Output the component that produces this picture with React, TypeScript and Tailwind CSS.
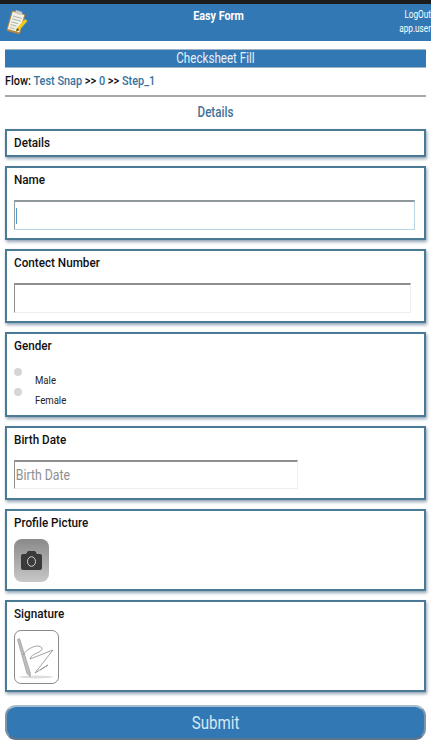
import React from "react";

function LogoIcon() {
  return (
    <svg width="22" height="26" viewBox="0 0 22 26">
      <g transform="rotate(16 10 13)">
        <rect x="3" y="3" width="14" height="21" rx="1.5" fill="#b8893a" />
        <rect x="4" y="4" width="12" height="18" fill="#f4f1e4" />
        <path d="M5.5 8h9M5.5 11h9M5.5 14h7M5.5 17h6M5.5 20h5" stroke="#a9b6b8" strokeWidth="1" />
        <rect x="6.5" y="1.5" width="7" height="3.5" rx="1" fill="#c9ccc4" />
      </g>
      <path d="M11 19l8-9 2.5 2-8 9-3.5 1.5z" fill="#f0c81e" />
      <path d="M11 19l-1 3.5 3.5-1.5z" fill="#6b5a2a" />
    </svg>
  );
}

function CameraIcon() {
  return (
    <div className="w-[35px] h-[43px] rounded-[8px] bg-gradient-to-b from-[#8a8a8a] to-[#c8c8c8] flex items-center justify-center">
      <svg width="21" height="19" viewBox="0 0 21 19">
        <path d="M2 3h3l2-3h7l2 3h3a2 2 0 0 1 2 2v12a2 2 0 0 1-2 2H2a2 2 0 0 1-2-2V5a2 2 0 0 1 2-2z" fill="#3a3a3a" />
        <ellipse cx="10.5" cy="10.5" rx="4" ry="4.8" fill="#3a3a3a" stroke="#d4d4d4" strokeWidth="1" />
      </svg>
    </div>
  );
}

function SignatureIcon() {
  return (
    <div className="w-[45px] h-[54px] rounded-[7px] border border-[#8a8a8a] bg-white">
      <svg width="43" height="52" viewBox="0 0 43 52">
        <ellipse cx="21" cy="46" rx="17" ry="1.4" fill="#dddddd" />
        <path d="M2.5 8.5l2-1 11 35-0.5 3-3-3z" fill="#c0c0c0" stroke="#8a8a8a" strokeWidth="0.6" />
        <path d="M8 24C12 17 24 12 27 17C28 22 16 22 15 28L38 19L20 42L33 34L25 39" fill="none" stroke="#8a8a8a" strokeWidth="0.8" />
      </svg>
    </div>
  );
}

function Card({ title, height, children }: { title: string; height: string; children?: React.ReactNode }) {
  return (
    <div className={`${height} border-2 border-[#4a7a96] bg-white pl-[7px] pt-[2px] shadow-[1px_2px_3px_rgba(60,90,120,0.55)]`}>
      <h2 className="origin-left scale-x-[0.9] text-[13px] leading-[20px] font-medium whitespace-nowrap text-[#111]">{title}</h2>
      {children}
    </div>
  );
}

export default function App() {
  return (
    <div className="w-[431px] h-[745px] bg-white font-['Roboto',sans-serif] overflow-hidden">
      <div className="h-[4px] bg-[#1c1c1c]" />
      <header className="h-[37px] bg-[#3278b4] flex text-white">
        <div className="flex-1 pt-[5px] pl-[6px]">
          <LogoIcon />
        </div>
        <div className="pt-[2px] scale-x-[0.83] text-[13px] leading-[20px] font-bold whitespace-nowrap">Easy Form</div>
        <div className="flex-1 origin-right scale-x-[0.82] text-right text-[10px] leading-[14px] pt-[4px]">
          <div>LogOut</div>
          <div>app.user</div>
        </div>
      </header>

      <main className="px-[5px] pt-[8px]">
        <div className="h-[19px] bg-[#3278b4] border-t border-b border-[#9fb5c6] text-center text-[#e6f0f8]">
          <div className="scale-x-[0.83] text-[14px] leading-[16px]">Checksheet Fill</div>
        </div>
        <div className="origin-left scale-x-[0.84] text-[13px] leading-[16px] mt-[5px] font-medium whitespace-nowrap text-[#111]">
          Flow: <span className="text-[#34739f]">Test Snap</span> &gt;&gt; <span className="text-[#34739f]">0</span> &gt;&gt;{" "}
          <span className="text-[#34739f]">Step_1</span>
        </div>
        <hr className="mt-[6px] border-t-2 border-[#a8a8a8]" />
        <div className="h-[32px] scale-x-[0.83] text-center text-[14px] leading-[30px] font-medium text-[#3f7296]">Details</div>

        <div className="flex flex-col gap-[9px]">
          <Card title="Details" height="h-[28px]" />
          <Card title="Name" height="h-[74px]">
            <div className="w-[401px] h-[30px] mt-[10px] border border-t-2 border-[#b9d6e4] border-t-[#8f989b] border-l-[#8fa0a8] flex items-center pl-[1px]">
              <div className="w-[1px] h-[16px] bg-[#5a9ac8]" />
            </div>
          </Card>
          <Card title="Contect Number" height="h-[74px]">
            <div className="w-[397px] h-[30px] mt-[10px] border border-t-2 border-[#eeeeee] border-t-[#8f8f8f] border-l-[#8f8f8f]" />
          </Card>
          <Card title="Gender" height="h-[85px]">
            <div className="mt-[12px] flex flex-col text-[11px] text-[#222]">
              <div className="h-[20px] flex">
                <div className="w-[8px] h-[8px] rounded-full bg-[#d6d6d6]" />
                <div className="ml-[13px] mt-[6px] leading-[14px] origin-left scale-x-[0.87]">Male</div>
              </div>
              <div className="h-[20px] flex">
                <div className="w-[8px] h-[8px] rounded-full bg-[#d6d6d6]" />
                <div className="ml-[13px] mt-[6px] leading-[14px] origin-left scale-x-[0.87]">Female</div>
              </div>
            </div>
          </Card>
          <Card title="Birth Date" height="h-[74px]">
            <div className="w-[284px] h-[29px] mt-[10px] border border-t-2 border-[#eeeeee] border-t-[#8f8f8f] border-l-[#8f8f8f] text-[#8f8f8f]">
              <div className="origin-left scale-x-[0.82] text-[15px] leading-[26px] pl-[1px]">Birth Date</div>
            </div>
          </Card>
          <Card title="Profile Picture" height="h-[82px]">
            <div className="mt-[6px]">
              <CameraIcon />
            </div>
          </Card>
          <Card title="Signature" height="h-[92px]">
            <div className="mt-[6px]">
              <SignatureIcon />
            </div>
          </Card>
        </div>

        <button className="w-full h-[35px] mt-[13px] rounded-[11px] bg-[#3278b4] border-2 border-[#7d95a8] border-t-[#a9bccb] border-b-[#5f7587] text-center text-[#d5e8f5]">
          <div className="scale-x-[0.84] text-[18px] leading-[30px]">Submit</div>
        </button>
      </main>
    </div>
  );
}
